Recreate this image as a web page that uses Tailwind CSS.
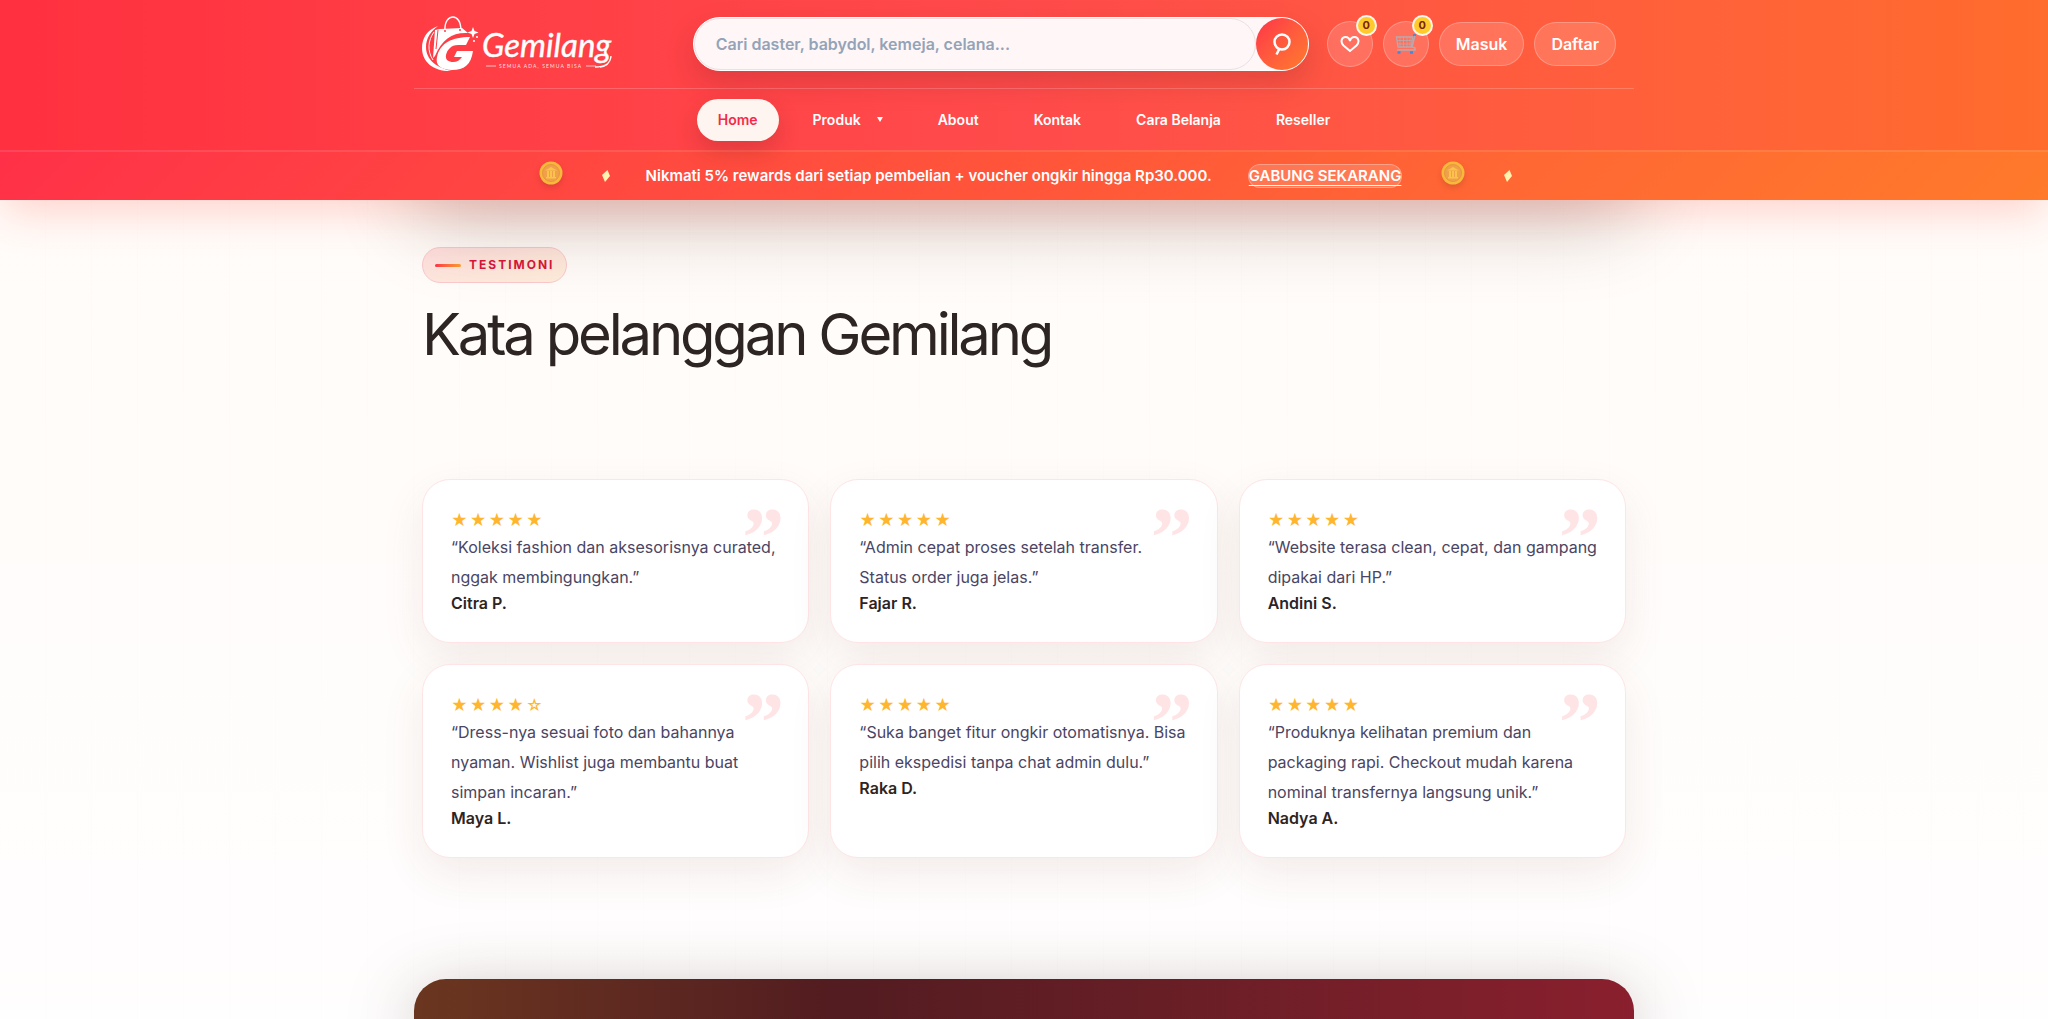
<!DOCTYPE html>
<html lang="id">
<head>
    <meta charset="UTF-8">
    <meta name="viewport" content="width=device-width, initial-scale=1.0">
    <title>Gemilang | Testimoni</title>
    <script src="https://cdn.jsdelivr.net/npm/@tailwindcss/browser@4"></script>
</head>
<body class="min-h-screen flex flex-col overflow-x-hidden bg-linear-to-b from-[#fffbf7] to-[#fffefe] font-['Inter',sans-serif] text-[#2d2424]">
    <header class="relative z-10 shrink-0">
        <!-- Bayangan di bawah header -->
        <div class="absolute inset-x-0 bottom-0 -z-10 mx-auto h-24 max-w-[1220px] rounded-[32px] shadow-[0_20px_80px_rgba(60,30,20,0.25)]"></div>

        <div class="bg-linear-to-r from-[#ff3040] via-[#ff4b4b] via-50% to-[#ff6c2c] shadow-[0_14px_40px_-4px_rgba(255,80,60,0.25)]">
            <div class="mx-auto max-w-[1220px]">
                <!-- Logo, pencarian, akun -->
                <div class="flex h-[89px] items-center justify-between border-b border-white/20 pl-2 pr-[18px]">
                    <a href="#" aria-label="Gemilang" class="flex items-center">
                        <svg class="h-[58px] w-[192px]" viewBox="0 0 192 58" fill="none">
                            <path d="M23 17C22 6 27 2 31 2S39 6 39 16" stroke="#fff" stroke-width="1.400"/>
                            <path d="M16 11C5 15 0 23 0 33c0 15 13 24 30 23C15 53 4 45 4 32c0-9 5-16 12-21Z" fill="#fff"/>
                            <path d="M12 17c-6 8-7 19-1 28" stroke="#fff" stroke-width="1"/>
                            <path d="m13 15 5-1 22-1 6 5C31 17 20 24 13 41l-2 2Z" fill="#fff"/>
                            <path d="m14 34 2-19" stroke="#ff3d44" stroke-width="1"/>
                            <circle cx="23" cy="16" r="1" fill="#ff3d44"/><circle cx="38" cy="15" r="1" fill="#ff3d44"/>
                            <path d="M48 22 44 30h-8c-7 0-11 5-12 10s3 7 7 7 7-2 9-5h-8l3-6h16c-2 14-9 19-21 19-11 0-17-5-15-13C18 28 30 22 48 22Z" fill="#fff"/>
                            <path d="m51 12 1.500 4 4 1.500-4 1.500-1.500 4-1.500-4-4-1.500 4-1.500Z" fill="#fff"/>
                            <circle cx="55" cy="22" r="1" fill="#fff"/><circle cx="52" cy="26" r="1" fill="#fff"/>
                            <text x="60" y="42" fill="#fff" stroke="#fff" stroke-width=".4" font-family="Lato" font-style="italic" font-size="33">Gemilang</text>
                            <path d="M64 51h10M164 51h10" stroke="#fff" stroke-width="1" opacity=".7"/>
                            <path d="M173 52c10 0 15-3 16-11M178 52c8-1 10-5 11-10" stroke="#fff" stroke-width="1.300"/>
                            <text x="77" y="53" fill="#fff" fill-opacity=".85" font-family="Lato" font-size="5" letter-spacing="1.100">SEMUA ADA, SEMUA BISA</text>
                        </svg>
                    </a>

                    <div class="flex items-center gap-[18px]">
                        <form class="flex h-[54px] w-[616px] rounded-full border border-white bg-[#fff7f7] shadow-[0_12px_28px_rgba(120,30,30,0.22)]">
                            <input type="search" aria-label="Cari produk" placeholder="Cari daster, babydol, kemeja, celana..." class="min-w-0 flex-1 rounded-full border border-[#e9e1e2] px-[21px] text-base font-semibold placeholder:text-[#94a3b8]">
                            <button type="submit" aria-label="Cari" class="flex size-[52px] items-center justify-center rounded-full bg-linear-to-br from-[#ff3048] to-[#ff7a2a]">
                                <svg class="size-7" viewBox="0 0 28 28" fill="none" stroke="#fff" stroke-width="2.500"><circle cx="14" cy="12" r="7.500"/><path d="m11.500 18.500-3 6"/></svg>
                            </button>
                        </form>
                        <div class="flex items-center gap-[10px]">
                            <button type="button" aria-label="Wishlist" class="relative flex size-[46px] items-center justify-center rounded-full border border-white/25 bg-white/15">
                                <svg class="size-5" viewBox="0 0 20 20" fill="none" stroke="#fff" stroke-width="2"><path d="M10 17 3.500 11.500C0 8 1.500 3 5.500 3 8 3 9.500 4.800 10 7c.5-2.200 2-4 4.500-4 4 0 5.500 5 2 8.500Z"/></svg>
                                <span class="absolute -top-[7px] -right-[5px] flex size-[21px] items-center justify-center rounded-full border-2 border-[#fff7ed] bg-[#ffca2c] text-[11px] font-bold text-[#7a2410]">0</span>
                            </button>
                            <button type="button" aria-label="Keranjang" class="relative flex size-[46px] items-center justify-center rounded-full border border-white/25 bg-white/15">
                                <svg class="size-[22px]" viewBox="0 0 22 22" fill="none" stroke="#b8a9ae" stroke-width="1.300">
                                    <path d="M1.500 4h16l-1 10H3Z"/>
                                    <path d="M5 4v10M8.500 4v10M12 4v10M15 4v10M2 7.500h15M2.500 11h14" stroke-width=".8"/>
                                    <path d="m20 2-3 12 3 1v2H2" stroke-width="1.500"/>
                                    <path d="M18 2h3" stroke="#5a86c8" stroke-width="2"/>
                                    <path d="M2.500 19.500h3M15 19.500h3" stroke="#4a86d8" stroke-width="2.500"/>
                                </svg>
                                <span class="absolute -top-[7px] -right-[5px] flex size-[21px] items-center justify-center rounded-full border-2 border-[#fff7ed] bg-[#ffca2c] text-[11px] font-bold text-[#7a2410]">0</span>
                            </button>
                            <a href="#" class="flex h-11 items-center rounded-full border border-white/25 bg-white/15 px-4 text-base font-semibold text-white">Masuk</a>
                            <a href="#" class="flex h-11 items-center rounded-full border border-white/25 bg-white/15 px-4 text-base font-semibold text-white">Daftar</a>
                        </div>
                    </div>
                </div>

                <!-- Menu utama -->
                <nav class="flex h-[61px] items-center justify-center gap-[13px] text-sm font-semibold text-white">
                    <a href="#" class="flex h-[42px] items-center rounded-full bg-[#fff5f0] px-[21px] text-[#f42a4a] shadow-[0_10px_22px_rgba(120,30,30,0.24)]">Home</a>
                    <a href="#" class="flex h-[42px] items-center gap-4 px-[21px]">Produk <svg class="h-[5px] w-[6px]" viewBox="0 0 6 5" fill="#fff"><path d="M0 0h6L3 5Z"/></svg></a>
                    <a href="#" class="flex h-[42px] items-center px-[21px]">About</a>
                    <a href="#" class="flex h-[42px] items-center px-[21px]">Kontak</a>
                    <a href="#" class="flex h-[42px] items-center px-[21px]">Cara Belanja</a>
                    <a href="#" class="flex h-[42px] items-center px-[21px]">Reseller</a>
                </nav>
            </div>

            <!-- Promo -->
            <div class="flex h-[50px] items-center justify-center gap-9 border-t-2 border-white/10 bg-linear-135 from-[#ff3048] via-[#ff553a] via-50% to-[#ff7a2a] bg-origin-border text-[15px] font-semibold text-white">
                <svg class="mx-[3px] mb-1.5 size-6 drop-shadow-md" viewBox="0 0 24 24"><circle cx="12" cy="12" r="11.500" fill="#f8b83c"/><circle cx="12" cy="12" r="8.500" fill="#f0a04b" stroke="#e9963a"/><path d="m6 9.500 6-3.500 6 3.500ZM8 10h2v6H8Zm3 0h2v6h-2Zm3 0h2v6h-2ZM7 16h10v1.500H7Z" fill="#fbc34a"/></svg>
                <svg class="h-3 w-2" viewBox="0 0 8 12" fill="#fff3b0"><path d="m5.500 0 2.500 6-5 6-3-7Z"/></svg>
                <span>Nikmati 5% rewards dari setiap pembelian + voucher ongkir hingga Rp30.000.</span>
                <a href="#" class="rounded-full border border-white/30 bg-white/15 underline underline-offset-4">GABUNG SEKARANG</a>
                <svg class="mx-[3px] mb-1.5 size-6 drop-shadow-md" viewBox="0 0 24 24"><circle cx="12" cy="12" r="11.500" fill="#f8b83c"/><circle cx="12" cy="12" r="8.500" fill="#f0a04b" stroke="#e9963a"/><path d="m6 9.500 6-3.500 6 3.500ZM8 10h2v6H8Zm3 0h2v6h-2Zm3 0h2v6h-2ZM7 16h10v1.500H7Z" fill="#fbc34a"/></svg>
                <svg class="h-3 w-2" viewBox="0 0 8 12" fill="#fff3b0"><path d="m5.500 0 2.500 6-5 6-3-7Z"/></svg>
            </div>
        </div>
    </header>

    <main class="flex flex-1 flex-col bg-[repeating-linear-gradient(90deg,transparent_0_45px,rgba(255,60,60,0.012)_45px_46px)]">
        <section class="mx-auto w-full max-w-[1220px] px-2 pt-[47px] pb-[121px]">
            <p class="inline-flex h-9 items-center gap-2 rounded-full border border-[#fbc9cb] bg-linear-to-br from-[#ff3048]/15 to-[#ff9a2a]/15 px-3 text-xs font-bold tracking-[2px] text-[#d9163a]">
                <span class="h-[3px] w-[26px] rounded-full bg-linear-to-r from-[#ff3048] to-[#ffa02a]"></span>TESTIMONI
            </p>
            <h1 class="mt-4 text-[58px] leading-[70px] tracking-[-0.055em]">Kata pelanggan Gemilang</h1>

            <!-- Daftar testimoni -->
            <div class="mt-[110px] grid grid-cols-3 gap-[21px]">
                <article class="relative rounded-[28px] border border-[#ffe4e6] bg-white p-7 shadow-[0_16px_44px_rgba(110,50,30,0.09)]">
                    <span aria-hidden="true" class="absolute top-4 right-6 font-['Liberation_Serif',serif] text-[84px] leading-[84px] font-bold text-[#ffe4e6]">”</span>
                    <p class="h-6 text-base leading-6 tracking-[2px] text-[#ffb52e]">★★★★★</p>
                    <p class="relative -mr-2 text-base leading-[30px] text-[#4a4563]">“Koleksi fashion dan aksesorisnya curated, nggak membingungkan.”</p>
                    <h2 class="text-base leading-[22px] font-semibold">Citra P.</h2>
                </article>
                <article class="relative rounded-[28px] border border-[#ffe4e6] bg-white p-7 shadow-[0_16px_44px_rgba(110,50,30,0.09)]">
                    <span aria-hidden="true" class="absolute top-4 right-6 font-['Liberation_Serif',serif] text-[84px] leading-[84px] font-bold text-[#ffe4e6]">”</span>
                    <p class="h-6 text-base leading-6 tracking-[2px] text-[#ffb52e]">★★★★★</p>
                    <p class="relative -mr-2 text-base leading-[30px] text-[#4a4563]">“Admin cepat proses setelah transfer. <br>Status order juga jelas.”</p>
                    <h2 class="text-base leading-[22px] font-semibold">Fajar R.</h2>
                </article>
                <article class="relative rounded-[28px] border border-[#ffe4e6] bg-white p-7 shadow-[0_16px_44px_rgba(110,50,30,0.09)]">
                    <span aria-hidden="true" class="absolute top-4 right-6 font-['Liberation_Serif',serif] text-[84px] leading-[84px] font-bold text-[#ffe4e6]">”</span>
                    <p class="h-6 text-base leading-6 tracking-[2px] text-[#ffb52e]">★★★★★</p>
                    <p class="relative -mr-2 text-base leading-[30px] text-[#4a4563]">“Website terasa clean, cepat, dan gampang dipakai dari HP.”</p>
                    <h2 class="text-base leading-[22px] font-semibold">Andini S.</h2>
                </article>
                <article class="relative rounded-[28px] border border-[#ffe4e6] bg-white p-7 shadow-[0_16px_44px_rgba(110,50,30,0.09)]">
                    <span aria-hidden="true" class="absolute top-4 right-6 font-['Liberation_Serif',serif] text-[84px] leading-[84px] font-bold text-[#ffe4e6]">”</span>
                    <p class="h-6 text-base leading-6 tracking-[2px] text-[#ffb52e]">★★★★☆</p>
                    <p class="relative -mr-2 text-base leading-[30px] text-[#4a4563]">“Dress-nya sesuai foto dan bahannya nyaman. Wishlist juga membantu buat simpan incaran.”</p>
                    <h2 class="text-base leading-[22px] font-semibold">Maya L.</h2>
                </article>
                <article class="relative rounded-[28px] border border-[#ffe4e6] bg-white p-7 shadow-[0_16px_44px_rgba(110,50,30,0.09)]">
                    <span aria-hidden="true" class="absolute top-4 right-6 font-['Liberation_Serif',serif] text-[84px] leading-[84px] font-bold text-[#ffe4e6]">”</span>
                    <p class="h-6 text-base leading-6 tracking-[2px] text-[#ffb52e]">★★★★★</p>
                    <p class="relative -mr-2 text-base leading-[30px] text-[#4a4563]">“Suka banget fitur ongkir otomatisnya. Bisa pilih ekspedisi tanpa chat admin dulu.”</p>
                    <h2 class="text-base leading-[22px] font-semibold">Raka D.</h2>
                </article>
                <article class="relative rounded-[28px] border border-[#ffe4e6] bg-white p-7 shadow-[0_16px_44px_rgba(110,50,30,0.09)]">
                    <span aria-hidden="true" class="absolute top-4 right-6 font-['Liberation_Serif',serif] text-[84px] leading-[84px] font-bold text-[#ffe4e6]">”</span>
                    <p class="h-6 text-base leading-6 tracking-[2px] text-[#ffb52e]">★★★★★</p>
                    <p class="relative -mr-2 text-base leading-[30px] text-[#4a4563]">“Produknya kelihatan premium dan packaging rapi. Checkout mudah karena nominal transfernya langsung unik.”</p>
                    <h2 class="text-base leading-[22px] font-semibold">Nadya A.</h2>
                </article>
            </div>
        </section>

        <section class="mx-auto w-full max-w-[1220px] flex-1 rounded-t-[32px] bg-linear-to-r from-[#6b361f] via-[#521c20] via-35% to-[#8a1f2e] shadow-[0_20px_70px_rgba(60,30,30,0.4)]"></section>
    </main>
</body>
</html>
